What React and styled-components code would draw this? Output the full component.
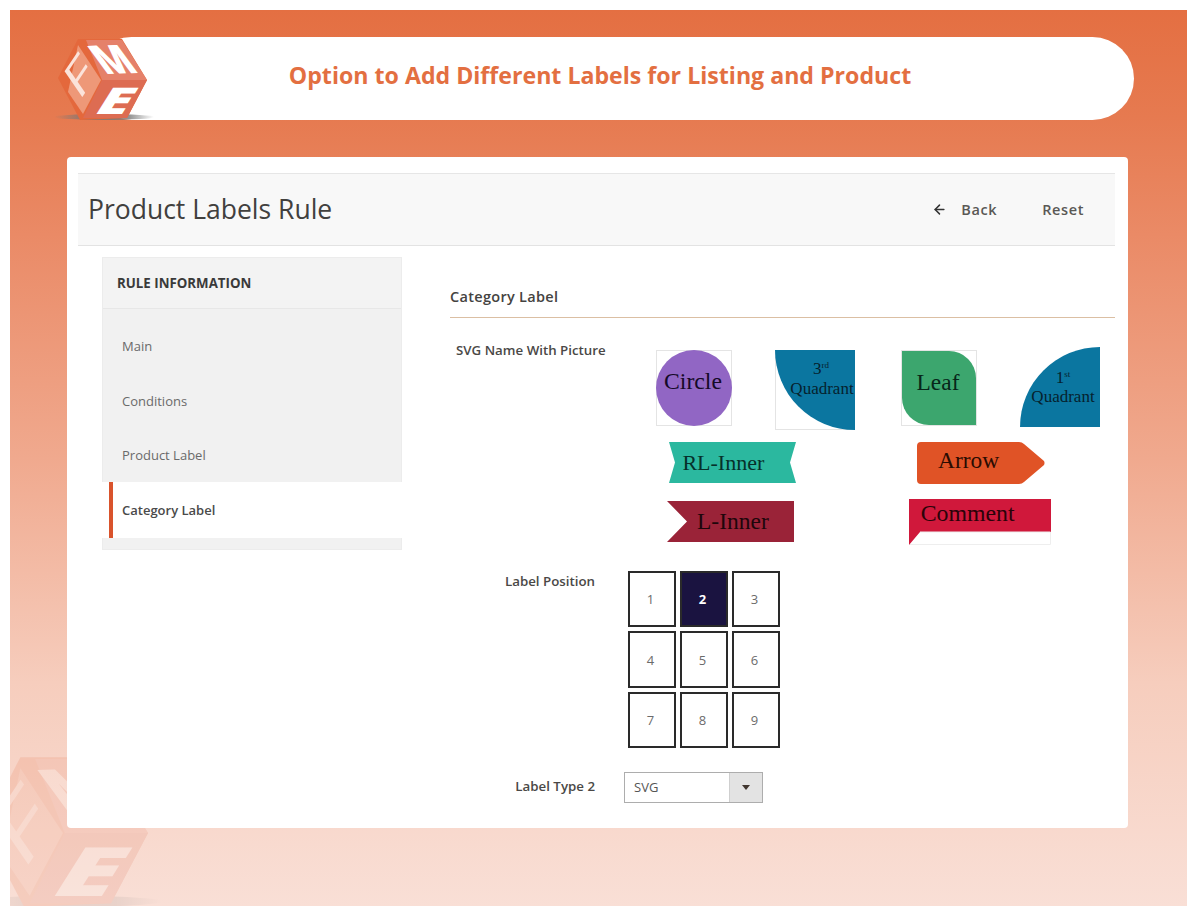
import React from 'react';
import styled, { createGlobalStyle } from 'styled-components';
import { ArrowLeft } from 'lucide-react';

const GlobalStyle = createGlobalStyle`
  html, body {
    margin: 0;
    background: #ffffff;
  }
  body {
    font-family: "Open Sans", "Liberation Sans", sans-serif;
  }
  * {
    box-sizing: border-box;
  }
`;

const Page = styled.div`
  width: 1197px;
  height: 916px;
  padding: 10px;
`;

const Frame = styled.div`
  position: relative;
  width: 1177px;
  height: 896px;
  padding: 27px 59px 0 57px;
  overflow: hidden;
  background: linear-gradient(180deg, #e46f42 0%, #e67a50 12%, #ea8a66 25%, #f0a98e 50%, #f6cdbd 75%, #f9dfd6 100%);
`;

const Watermark = styled.div`
  position: absolute;
  left: 0;
  bottom: 0;
  width: 160px;
  height: 149px;
  opacity: 0.15;
`;

const Banner = styled.div`
  position: relative;
  display: flex;
  align-items: center;
  justify-content: center;
  height: 83px;
  margin: 0 -6px 0 23px;
  padding-bottom: 8px;
  background: #ffffff;
  border-radius: 42px;
`;

const BannerTitle = styled.h1`
  margin: 0 0 0 -24px;
  font-size: 23.15px;
  font-weight: 700;
  color: #e36f41;
`;

const LogoSlot = styled.div`
  position: absolute;
  left: -40px;
  top: -7px;
  width: 110px;
  height: 100px;
`;

const Card = styled.div`
  position: relative;
  height: 671px;
  margin-top: 37px;
  padding: 16px 13px 0 11px;
  background: #ffffff;
  border-radius: 4px;
`;

const PageHeader = styled.div`
  display: flex;
  align-items: center;
  justify-content: space-between;
  height: 73px;
  padding: 0 31px 0 10px;
  background: #f8f8f8;
  border-top: 1px solid #e6e6e6;
  border-bottom: 1px solid #e3e3e3;
`;

const PageTitle = styled.h2`
  margin: 0 0 2px;
  font-size: 26.5px;
  font-weight: 400;
  color: #41403e;
`;

const Actions = styled.div`
  display: flex;
  align-items: center;
`;

const ActionButton = styled.span`
  display: flex;
  align-items: center;
  gap: 14px;
  margin-left: ${p => p.$ml || 0}px;
  font-size: 14.5px;
  font-weight: 600;
  letter-spacing: 0.6px;
  color: #5a5855;
`;

const Columns = styled.div`
  display: flex;
  align-items: flex-start;
`;

const Sidebar = styled.nav`
  flex: none;
  width: 300px;
  height: 293px;
  margin: 11px 48px 0 24px;
  background: #f1f1f1;
  border: 1px solid #ececec;
`;

const SidebarTitle = styled.div`
  display: flex;
  align-items: center;
  height: 51px;
  padding-left: 14px;
  background: #f3f3f3;
  border-bottom: 1px solid #e7e7e7;
  font-size: 13.3px;
  font-weight: 700;
  color: #3a3a3a;
`;

const SidebarList = styled.ul`
  margin: 0;
  padding: 10px 0 0;
  list-style: none;
`;

const SidebarItem = styled.li`
  display: flex;
  align-items: center;
  height: ${p => (p.$active ? 56 : 54.5)}px;
  margin: ${p => (p.$active ? '-1px -1px 0' : '0')};
  padding-left: ${p => (p.$active ? 20 : 19)}px;
  font-size: 13px;
  font-weight: ${p => (p.$active ? 600 : 400)};
  color: ${p => (p.$active ? '#4a4a4a' : '#6a6a6a')};
  background: ${p =>
    p.$active
      ? 'linear-gradient(to right, #fff 7px, #d9532c 7px, #d9532c 11px, #fff 11px)'
      : 'transparent'};
`;

const Content = styled.section`
  flex: 1;
`;

const SectionTitle = styled.h3`
  margin: 0 0 23px;
  padding: 41px 0 10px;
  font-size: 14.5px;
  line-height: 20px;
  font-weight: 600;
  letter-spacing: 0.3px;
  color: #454341;
  border-bottom: 1px solid #dbbfa3;
`;

const FormRow = styled.div`
  display: flex;
  align-items: flex-start;
  margin-top: ${p => p.$mt || 0}px;
`;

const FieldLabel = styled.label`
  flex: none;
  width: ${p => (p.$wide ? 190 : 145)}px;
  margin-right: ${p => p.$gap || 0}px;
  padding-left: ${p => (p.$wide ? 6 : 0)}px;
  padding-top: ${p => p.$pt || 0}px;
  font-size: 13.3px;
  line-height: ${p => p.$lh || 18}px;
  font-weight: 600;
  text-align: ${p => (p.$wide ? 'left' : 'right')};
  color: #4a4846;
`;

const Swatches = styled.div`
  padding-top: 6px;
`;

const SwatchRow = styled.div`
  display: flex;
  align-items: flex-start;
  margin-top: ${p => p.$mt || 0}px;
`;

const Swatch = styled.svg`
  display: block;
  flex: none;
  margin: ${p => p.$mt || 0}px 0 0 ${p => p.$ml || 0}px;
  font-family: "Liberation Serif", "Times New Roman", serif;
  overflow: visible;
`;

const PositionGrid = styled.div`
  display: grid;
  grid-template-columns: repeat(3, 48px);
  grid-template-rows: 56px 57px 56px;
  gap: 4px;
`;

const PositionCell = styled.div`
  display: flex;
  align-items: center;
  justify-content: center;
  padding-right: 3px;
  font-size: 13px;
  font-weight: ${p => (p.$active ? 700 : 400)};
  color: ${p => (p.$active ? '#ffffff' : '#6b6b6b')};
  background: ${p => (p.$active ? '#1a1340' : '#ffffff')};
  border: 2px solid #2a2a2a;
`;

const Select = styled.div`
  display: flex;
  width: 139px;
  height: 31px;
  border: 1px solid #adadad;
`;

const SelectValue = styled.span`
  flex: 1;
  padding-left: 9px;
  font-size: 13px;
  line-height: 29px;
  color: #555555;
`;

const SelectCaret = styled.span`
  display: flex;
  align-items: center;
  justify-content: center;
  width: 33px;
  background: #e3e3e3;
  border-left: 1px solid #cfcfcf;
  &::after {
    content: '';
    border-style: solid;
    border-width: 5px 4px 0;
    border-color: #41362f transparent transparent;
  }
`;

// drawn once, the faded copy in the corner is the same mark
function LogoMark({ viewBox = '0 0 110 100', shadowId }) {
  return (
    <svg width="100%" height="100%" viewBox={viewBox} style={{ display: 'block' }}>
      <defs>
        <linearGradient id={shadowId} x1="0" x2="1">
          <stop offset="0" stopColor="#777" stopOpacity="0" />
          <stop offset="0.3" stopColor="#777" stopOpacity="0.8" />
          <stop offset="0.75" stopColor="#777" stopOpacity="0.8" />
          <stop offset="1" stopColor="#777" stopOpacity="0" />
        </linearGradient>
      </defs>
      <ellipse cx="54" cy="87" rx="50" ry="3" fill={`url(#${shadowId})`} />
      <polygon points="28,9 72,9 97,50 77,88 30,90 8,48" fill="#e4683c" />
      <polygon points="36,10 72,10 97,50 52,50" fill="#e5816a" />
      <polygon points="28,15 51,50 33,84 18,62" fill="#ee9878" />
      <polygon points="52,50 97,50 77,88 33,88" fill="#dd6c52" />
      <g fontFamily="'Open Sans', sans-serif" fontSize="40">
        <text transform="matrix(0.85,-1.27,0.62,0.9,29,72)" fill="#fbe3da" fontWeight="500">F</text>
        <text transform="matrix(0.92,-0.03,0.72,0.98,55,44)" fill="#ffffff" fontWeight="800">M</text>
        <text transform="matrix(1.5,0,-0.58,0.92,42,84)" fill="#ffffff" fontWeight="800">E</text>
      </g>
    </svg>
  );
}

function SwatchBox({ size }) {
  return <rect x="0.5" y="0.5" width={size - 1} height={size - 1} fill="none" stroke="#e4e4e4" />;
}

const positions = [1, 2, 3, 4, 5, 6, 7, 8, 9];

function App() {
  return (
    <Page>
      <GlobalStyle />
      <Frame>
        <Watermark>
          <LogoMark viewBox="22.4 8.9 86.5 80.6" shadowId="markShadow" />
        </Watermark>
        <Banner>
          <LogoSlot>
            <LogoMark shadowId="logoShadow" />
          </LogoSlot>
          <BannerTitle>Option to Add Different Labels for Listing and Product</BannerTitle>
        </Banner>
        <Card>
          <PageHeader>
            <PageTitle>Product Labels Rule</PageTitle>
            <Actions>
              <ActionButton>
                <ArrowLeft size={15} strokeWidth={2.4} color="#333333" />
                Back
              </ActionButton>
              <ActionButton $ml={45}>Reset</ActionButton>
            </Actions>
          </PageHeader>
          <Columns>
            <Sidebar>
              <SidebarTitle>RULE INFORMATION</SidebarTitle>
              <SidebarList>
                <SidebarItem>Main</SidebarItem>
                <SidebarItem>Conditions</SidebarItem>
                <SidebarItem>Product Label</SidebarItem>
                <SidebarItem $active>Category Label</SidebarItem>
              </SidebarList>
            </Sidebar>
            <Content>
              <SectionTitle>Category Label</SectionTitle>
              <FormRow>
                <FieldLabel $wide>SVG Name With Picture</FieldLabel>
                <Swatches>
                  <SwatchRow>
                    <Swatch $ml={16} $mt={3} width="76" height="76" viewBox="0 0 76 76">
                      <SwatchBox size={76} />
                      <circle cx="38" cy="38" r="38" fill="#9166c4" />
                      <text x="37" y="39" fontSize="23.7" textAnchor="middle" fill="#150a28">Circle</text>
                    </Swatch>
                    <Swatch $ml={43} $mt={3} width="80" height="80" viewBox="0 0 80 80">
                      <SwatchBox size={80} />
                      <path d="M0 0H80V80A80 80 0 0 1 0 0Z" fill="#0b76a0" />
                      <text x="46" y="24" fontSize="17" textAnchor="middle" fill="#06222e">
                        3<tspan fontSize="9" dy="-6">rd</tspan>
                      </text>
                      <text x="47" y="44" fontSize="17" textAnchor="middle" fill="#06222e">Quadrant</text>
                    </Swatch>
                    <Swatch $ml={46} $mt={3} width="76" height="76" viewBox="0 0 76 76">
                      <SwatchBox size={76} />
                      <path d="M1 1H48A27 27 0 0 1 75 28V75H28A27 27 0 0 1 1 48Z" fill="#3ca66e" />
                      <text x="37" y="40" fontSize="23.4" textAnchor="middle" fill="#07261a">Leaf</text>
                    </Swatch>
                    <Swatch $ml={43} width="80" height="80" viewBox="0 0 80 80">
                      <path d="M0 80A80 80 0 0 1 80 0V80Z" fill="#0b76a0" />
                      <text x="43" y="36" fontSize="17" textAnchor="middle" fill="#06222e">
                        1<tspan fontSize="9" dy="-6">st</tspan>
                      </text>
                      <text x="43" y="55" fontSize="17" textAnchor="middle" fill="#06222e">Quadrant</text>
                    </Swatch>
                  </SwatchRow>
                  <SwatchRow $mt={12}>
                    <Swatch $ml={29} width="127" height="41" viewBox="0 0 127 41">
                      <polygon points="0,0 127,0 121,20.5 127,41 0,41 6,20.5" fill="#2bb89f" />
                      <text x="13.4" y="28" fontSize="22" fill="#06302a">RL-Inner</text>
                    </Swatch>
                    <Swatch $ml={121} width="128" height="42" viewBox="0 0 128 42">
                      <path d="M4 0H102Q105 0 107 2L127 19Q128 21 127 23L107 40Q105 42 102 42H4Q0 42 0 38V4Q0 0 4 0Z" fill="#e05326" />
                      <text x="21" y="26" fontSize="23.4" fill="#2a0c02">Arrow</text>
                    </Swatch>
                  </SwatchRow>
                  <SwatchRow $mt={15}>
                    <Swatch $ml={27} $mt={2} width="127" height="41" viewBox="0 0 127 41">
                      <polygon points="0,0 127,0 127,41 0,41 20,20.5" fill="#9a2338" />
                      <text x="30" y="28.3" fontSize="23.5" fill="#1e060b">L-Inner</text>
                    </Swatch>
                    <Swatch $ml={115} width="142" height="46" viewBox="0 0 142 46">
                      <path d="M0 0H142V33H11L0 46Z" fill="#d0183b" />
                      <path d="M11 33H141.5V45.5H1" fill="none" stroke="#eeeeee" />
                      <text x="11.7" y="21.7" fontSize="23.8" fill="#2b0309">Comment</text>
                    </Swatch>
                  </SwatchRow>
                </Swatches>
              </FormRow>
              <FormRow $mt={26}>
                <FieldLabel $gap={33} $pt={1}>Label Position</FieldLabel>
                <PositionGrid>
                  {positions.map(n => (
                    <PositionCell key={n} $active={n === 2}>{n}</PositionCell>
                  ))}
                </PositionGrid>
              </FormRow>
              <FormRow $mt={24}>
                <FieldLabel $gap={29} $lh={29}>Label Type 2</FieldLabel>
                <Select>
                  <SelectValue>SVG</SelectValue>
                  <SelectCaret />
                </Select>
              </FormRow>
            </Content>
          </Columns>
        </Card>
      </Frame>
    </Page>
  );
}

export default App;
